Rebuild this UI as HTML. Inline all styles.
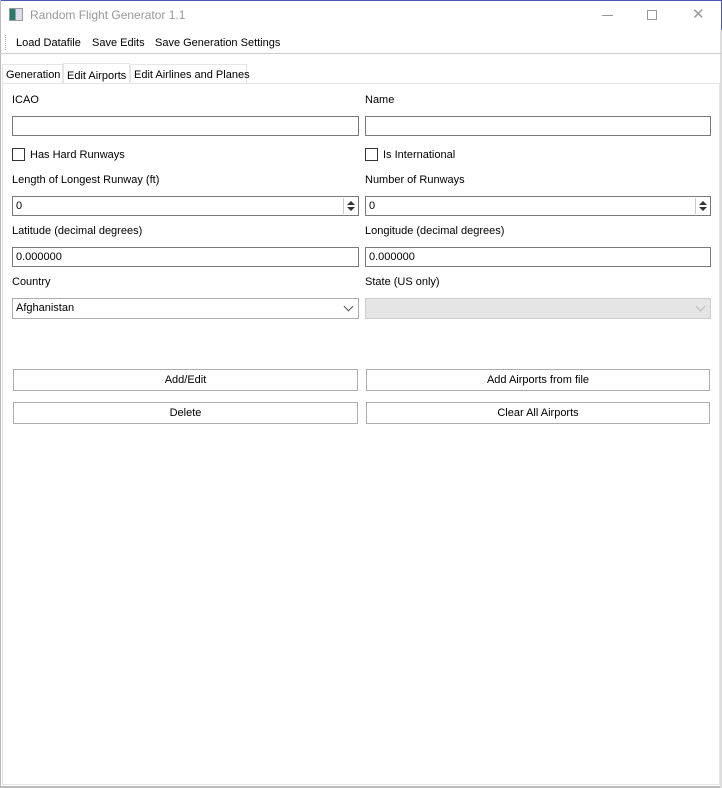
<!DOCTYPE html>
<html><head><meta charset="utf-8"><style>
*{box-sizing:border-box;margin:0;padding:0}
body{width:722px;height:788px;background:#fff;position:relative;overflow:hidden;font-family:"Liberation Sans",sans-serif;font-size:11px;color:#000}
.a{position:absolute;white-space:nowrap}
.in{position:absolute;border:1px solid #7a7a7a;background:#fff;height:20px;padding:3px 3px;font-size:11px}
.btn{position:absolute;border:1px solid #adadad;background:#fff;height:22px;text-align:center;line-height:20px}
.cb{position:absolute;width:13px;height:13px;border:1px solid #333;background:#fff}
.spin{position:absolute;right:1px;top:1px;width:14px;height:16px;border-left:1px solid #ccc}
.spin i{position:absolute;left:3px;width:0;height:0;border-left:4px solid transparent;border-right:4px solid transparent}
.dd{position:absolute;right:6px;top:4px;width:7px;height:7px;border-right:1px solid #555;border-bottom:1px solid #555;transform:rotate(45deg)}
</style></head><body>
<div class="a" style="left:0;top:0;width:722px;height:1px;background:#4a5bb0"></div>
<div class="a" style="right:0;top:0;width:1px;height:30px;background:#4a5bb0"></div>
<div class="a" style="left:0;top:0;width:1px;height:788px;background:#bbb"></div>
<div class="a" style="left:0;top:786px;width:722px;height:2px;background:#bbb"></div>
<div class="a" style="right:0;top:30px;width:2px;height:758px;background:#ddd"></div>
<div class="a" style="left:9px;top:8px;width:14px;height:13px;border:1px solid #999;background:linear-gradient(90deg,#2a7a6a 0 45%,#dde 45%)"></div>
<div class="a" style="left:30px;top:8px;font-size:12px;color:#999">Random Flight Generator 1.1</div>
<div class="a" style="left:602px;top:15px;width:11px;height:1px;background:#999"></div>
<div class="a" style="left:647px;top:10px;width:10px;height:10px;border:1px solid #999"></div>
<div class="a" style="left:692px;top:9px;font-size:15px;color:#999;line-height:12px">✕</div>
<div class="a" style="left:5px;top:35px;width:1px;height:15px;border-left:1px dotted #aaa"></div>
<div class="a" style="left:16px;top:37px">Load Datafile</div>
<div class="a" style="left:92px;top:37px">Save Edits</div>
<div class="a" style="left:155px;top:37px">Save Generation Settings</div>
<div class="a" style="left:0;top:53px;width:722px;height:1px;background:#ccc"></div>
<div class="a" style="left:2px;top:64px;width:61px;height:20px;border:1px solid #e5e5e5;border-bottom:none;padding:4px 0 0 3px">Generation</div>
<div class="a" style="left:63px;top:63px;width:67px;height:21px;border:1px solid #e5e5e5;border-bottom:none;padding:6px 0 0 3px">Edit Airports</div>
<div class="a" style="left:130px;top:64px;width:117px;height:20px;border:1px solid #e5e5e5;border-bottom:none;padding:4px 0 0 3px">Edit Airlines and Planes</div>
<div class="a" style="left:2px;top:83px;width:718px;height:702px;border:1px solid #e5e5e5"></div>
<div class="a" style="left:12px;top:94px">ICAO</div>
<div class="a" style="left:365px;top:94px">Name</div>
<div class="in" style="left:12px;top:116px;width:347px"></div>
<div class="in" style="left:365px;top:116px;width:346px"></div>
<div class="cb" style="left:12px;top:148px"></div><div class="a" style="left:30px;top:149px">Has Hard Runways</div>
<div class="cb" style="left:365px;top:148px"></div><div class="a" style="left:383px;top:149px">Is International</div>
<div class="a" style="left:12px;top:174px">Length of Longest Runway (ft)</div>
<div class="a" style="left:365px;top:174px">Number of Runways</div>
<div class="in" style="left:12px;top:196px;width:347px">0<div class="spin"><i style="top:3px;border-bottom:4px solid #333"></i><i style="top:9px;border-top:4px solid #333"></i></div></div>
<div class="in" style="left:365px;top:196px;width:346px">0<div class="spin"><i style="top:3px;border-bottom:4px solid #333"></i><i style="top:9px;border-top:4px solid #333"></i></div></div>
<div class="a" style="left:12px;top:225px">Latitude (decimal degrees)</div>
<div class="a" style="left:365px;top:225px">Longitude (decimal degrees)</div>
<div class="in" style="left:12px;top:247px;width:347px">0.000000</div>
<div class="in" style="left:365px;top:247px;width:346px">0.000000</div>
<div class="a" style="left:12px;top:276px">Country</div>
<div class="a" style="left:365px;top:276px">State (US only)</div>
<div class="in" style="left:12px;top:298px;width:347px;border-color:#adadad;height:21px">Afghanistan<div class="dd"></div></div>
<div class="in" style="left:365px;top:298px;width:346px;border-color:#ccc;background:#e5e5e5;height:21px"><div class="dd" style="border-color:#bbb"></div></div>
<div class="btn" style="left:13px;top:369px;width:345px">Add/Edit</div>
<div class="btn" style="left:366px;top:369px;width:344px">Add Airports from file</div>
<div class="btn" style="left:13px;top:402px;width:345px">Delete</div>
<div class="btn" style="left:366px;top:402px;width:344px">Clear All Airports</div>
</body></html>
